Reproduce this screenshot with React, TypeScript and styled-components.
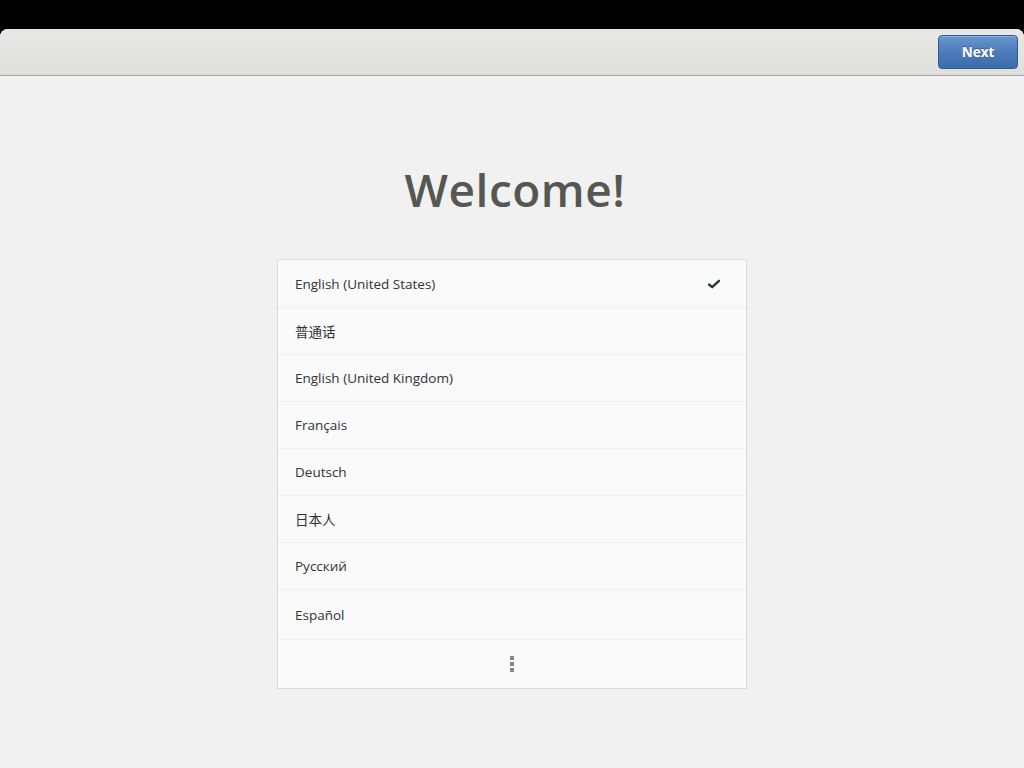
import React from "react";
import styled, { createGlobalStyle } from "styled-components";

const Global = createGlobalStyle`
  html, body { margin: 0; padding: 0; background: #000; }
  body { font-family: "Open Sans", "Noto Sans", "Noto Sans CJK SC", sans-serif; }
  #root { width: 1024px; height: 768px; }
`;

const Screen = styled.div`
  width: 1024px;
  height: 768px;
  background: #000;
  padding-top: 29px;
  box-sizing: border-box;
  display: flex;
  flex-direction: column;
`;

const Window = styled.div`
  flex: 1;
  display: flex;
  flex-direction: column;
  background: #f1f1f1;
  border-radius: 8px 8px 0 0;
  overflow: hidden;
`;

const HeaderBar = styled.div`
  height: 47px;
  box-sizing: border-box;
  background: linear-gradient(#e8e8e7, #dfe0de);
  border-bottom: 1px solid #a4a4a4;
  display: flex;
  justify-content: flex-end;
  align-items: flex-start;
  padding: 6px 6px 0 0;
`;

const NextButton = styled.button`
  width: 80px;
  height: 34px;
  border: 1px solid #2e5a94;
  border-radius: 4px;
  background: linear-gradient(#6a96cd, #4a7ab9 55%, #3d6cab);
  box-shadow: inset 0 1px 0 rgba(255, 255, 255, 0.25);
  color: #ffffff;
  font-family: "Open Sans", "Noto Sans", sans-serif;
  font-size: 13.5px;
  font-weight: 700;
  text-shadow: 0 -1px 0 rgba(0, 0, 0, 0.3);
  cursor: pointer;
`;

const Content = styled.div`
  flex: 1;
  display: flex;
  flex-direction: column;
  align-items: center;
`;

const Title = styled.h1`
  margin: 82px 0 0 0;
  padding-left: 6px;
  font-family: "Open Sans", "Noto Sans", sans-serif;
  font-size: 46px;
  font-weight: 600;
  line-height: 62px;
  color: #555753;
  letter-spacing: 0.5px;
`;

const List = styled.div`
  margin-top: 39px;
  width: 470px;
  box-sizing: border-box;
  border: 1px solid #dadada;
  background: #fafafa;
  display: flex;
  flex-direction: column;
`;

const Row = styled.div<{ $h: number }>`
  height: ${(p) => p.$h}px;
  box-sizing: border-box;
  display: flex;
  align-items: center;
  justify-content: space-between;
  padding: 0 26px 0 17px;
  border-top: 1px solid #efefef;
  &:first-child { border-top: none; }
  font-size: 13.5px;
  color: #2e3436;
  font-family: "Open Sans", "Noto Sans", "Noto Sans CJK SC", sans-serif;
`;

const MoreRow = styled.div`
  height: 48px;
  border-top: 1px solid #efefef;
  display: flex;
  align-items: center;
  justify-content: center;
`;

const Dots = styled.div`
  display: flex;
  flex-direction: column;
  gap: 2px;
  & > span {
    width: 4px;
    height: 4px;
    background: #888a85;
  }
`;

const Check = () => (
  <svg width="12" height="10" viewBox="0 0 12 10">
    <path d="M1 5.5 L4.2 8.2 L11 1.8" fill="none" stroke="#2e3436" strokeWidth="2.4" strokeLinejoin="round" strokeLinecap="round" />
  </svg>
);

const languages: { name: string; h: number; checked?: boolean }[] = [
  { name: "English (United States)", h: 47, checked: true },
  { name: "普通话", h: 47 },
  { name: "English (United Kingdom)", h: 47 },
  { name: "Français", h: 47 },
  { name: "Deutsch", h: 47 },
  { name: "日本人", h: 47 },
  { name: "Русский", h: 47 },
  { name: "Español", h: 50 },
];

export default function App() {
  return (
    <Screen>
      <Global />
      <Window>
        <HeaderBar>
          <NextButton>Next</NextButton>
        </HeaderBar>
        <Content>
          <Title>Welcome!</Title>
          <List>
            {languages.map((l) => (
              <Row key={l.name} $h={l.h}>
                <span>{l.name}</span>
                {l.checked && <Check />}
              </Row>
            ))}
            <MoreRow>
              <Dots>
                <span />
                <span />
                <span />
              </Dots>
            </MoreRow>
          </List>
        </Content>
      </Window>
    </Screen>
  );
}
